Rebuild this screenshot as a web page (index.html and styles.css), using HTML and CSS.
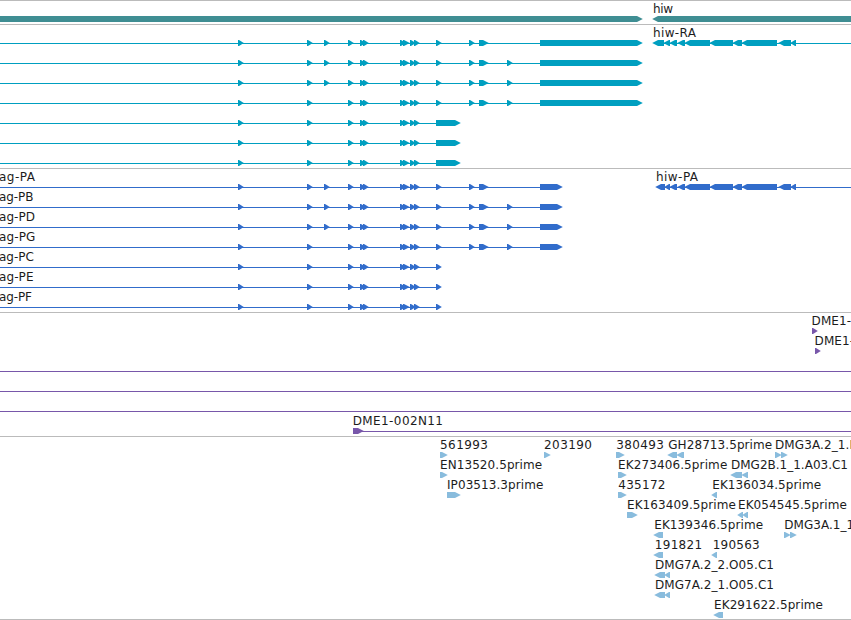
FILE: index.html
```html
<!DOCTYPE html>
<html lang="en">

<head>
    <meta charset="UTF-8">
    <meta name="viewport" content="width=device-width, initial-scale=1.0">
    <title>Genome Tracks</title>
    <link rel="stylesheet" href="styles.css">
</head>

<body>
    <div class="browser">
        <div class="track gene" id="genes"></div>
        <div class="track transcript" id="transcripts"></div>
        <div class="track protein" id="proteins"></div>
        <div class="track bac" id="bacs"></div>
        <div class="track est" id="ests"></div>
    </div>

    <script src="script.js"></script>
</body>

</html>
```

FILE: styles.css
```css
* {
    box-sizing: border-box;
}

body {
    margin: 0;
    background-color: white;
    overflow: hidden;
}

.browser {
    display: flex;
    flex-direction: column;
    width: 851px;
    height: 620px;
    border-bottom: 1px solid #bbbbbb;
}

.track {
    display: flex;
    flex-direction: column;
    border-top: 1px solid #bbbbbb;
    padding: 1px 0 2px 0;
}

.est {
    padding-bottom: 0;
}

.row {
    display: block;
    flex: none;
    width: 851px;
    height: 20px;
}

.label {
    font-family: "DejaVu Sans", sans-serif;
    font-size: 12px;
    fill: #1c1c1c;
}

.line {
    shape-rendering: crispEdges;
}

.gene {
    fill: #3f8e93;
}

.transcript {
    fill: #009fc0;
}

.protein {
    fill: #316ccb;
}

.bac {
    fill: #7857aa;
}

.est {
    fill: #89bcdd;
}
```

FILE: script.js
```js
const SVG = "http://www.w3.org/2000/svg";

const add = (parent, name, attrs) => {
    const el = document.createElementNS(SVG, name);
    for (const key in attrs) {
        el.setAttribute(key, attrs[key]);
    }
    parent.appendChild(el);
    return el;
};

// block with an arrow head, dir is 1 (forward) or -1 (reverse)
const arrow = (start, end, dir) => {
    const head = Math.min(5, end - start - 1);
    if (dir > 0) {
        return `${start},14 ${end - head},14 ${end + 0.8},17 ${end - head},20 ${start},20`;
    }
    return `${end},14 ${start + head},14 ${start - 0.8},17 ${start + head},20 ${end},20`;
};

// labels: [text, x, length], lines: [start, end], blocks: [start, end, dir]
const drawRow = (id, row) => {
    const svg = add(document.getElementById(id), "svg", { class: "row", viewBox: "0 0 851 20" });
    (row.lines || []).forEach(([a, b]) => {
        add(svg, "rect", { class: "line", x: a, y: 17, width: b - a, height: 1 });
    });
    (row.blocks || []).forEach(([a, b, dir]) => {
        add(svg, "polygon", { points: arrow(a, b, dir) });
    });
    (row.labels || []).forEach(([text, x, length]) => {
        const label = add(svg, "text", { class: "label", x: x, y: 11 });
        if (length) {
            label.setAttribute("textLength", length);
        }
        label.textContent = text;
    });
};

const forward = (list) => list.map(([a, b]) => [a, b, 1]);
const reverse = (list) => list.map(([a, b]) => [a, b, -1]);

const first = [[238, 243], [307, 312]];
const extra = [[324, 329]];
const middle = [[348, 353], [360, 365], [363, 368], [400, 405], [403, 409], [410, 415], [414, 419]];
const late = [[436, 441], [469, 474], [479, 488]];
const last = [[507, 512]];

const hiw = [[670, 677], [678, 685], [685, 710], [710, 733], [733, 742], [742, 777], [779, 791], [791, 796]];

// the seven splice forms, shared by transcripts and proteins
const forms = (longEnd, shortEnd) => [
    [...first, ...extra, ...middle, ...late, [540, longEnd]],
    [...first, ...extra, ...middle, ...late, ...last, [540, longEnd]],
    [...first, ...extra, ...middle, ...late, ...last, [540, longEnd]],
    [...first, ...middle, ...late, ...last, [540, longEnd]],
    [...first, ...middle, [436, shortEnd]],
    [...first, ...middle, [436, shortEnd]],
    [...first, ...middle, [436, shortEnd]]
];

drawRow("genes", {
    labels: [["hiw", 653, 20]],
    blocks: [[-10, 642, 1], [653, 860, -1]]
});

forms(642, 460).forEach((exons, i) => {
    const row = { lines: [[0, exons[exons.length - 1][1] - 2]], blocks: forward(exons), labels: [] };
    if (i === 0) {
        row.lines.push([655, 851]);
        row.blocks.push(...reverse([[653, 664], [664, 670], ...hiw]));
        row.labels.push(["hiw-RA", 653, 43]);
    }
    drawRow("transcripts", row);
});

const proteinNames = [["PA", 36], ["PB", 34.5], ["PD", 36], ["PG", 36.3], ["PC", 35], ["PE", 34.5], ["PF", 33]];
forms(562, 441).forEach((exons, i) => {
    const row = { lines: [[0, exons[exons.length - 1][1] - 2]], blocks: forward(exons) };
    row.labels = [["ag-" + proteinNames[i][0], -1, proteinNames[i][1]]];
    if (i === 0) {
        row.lines.push([658, 851]);
        row.blocks.push(...reverse([[656, 665], [665, 670], ...hiw]));
        row.labels.push(["hiw-PA", 656, 42]);
    }
    drawRow("proteins", row);
});

[
    { labels: [["DME1-", 811.6, 39.4]], blocks: [[812, 817, 1]] },
    { labels: [["DME1-", 814.6, 39.4]], blocks: [[815, 820, 1]] },
    { lines: [[0, 851]] },
    { lines: [[0, 851]] },
    { lines: [[0, 851]] },
    { labels: [["DME1-002N11", 352.7, 90.3]], lines: [[353, 851]], blocks: [[353, 363, 1]] }
].forEach((row) => drawRow("bacs", row));

[
    {
        labels: [["561993", 440, 48], ["203190", 544, 48], ["380493", 616.3, 47.5], ["GH28713.5prime", 668.2, 104], ["DMG3A.2_1.I", 775, 78]],
        blocks: [[440, 447, 1], [544, 550, 1], [616, 624, 1], [668, 677, -1], [677, 684, -1], [775, 781, 1], [781, 787, 1]]
    },
    {
        labels: [["EN13520.5prime", 440, 102.2], ["EK273406.5prime", 618, 109.3], ["DMG2B.1_1.A03.C1", 731, 117]],
        blocks: [[440, 447, 1], [618, 626, 1], [731, 742, -1], [742, 748, -1]]
    },
    {
        labels: [["IP03513.3prime", 447, 96.3], ["435172", 618.3, 47.2], ["EK136034.5prime", 712.2, 109]],
        blocks: [[447, 460, 1], [618, 626, 1], [712, 717, -1]]
    },
    {
        labels: [["EK163409.5prime", 627, 108.8], ["EK054545.5prime", 738, 108.8]],
        blocks: [[627, 637, 1], [738, 743, -1], [743, 748, -1]]
    },
    {
        labels: [["EK139346.5prime", 654.2, 109], ["DMG3A.1_1", 784.2, 70]],
        blocks: [[654, 663, -1], [784, 790, 1], [790, 796, 1]]
    },
    {
        labels: [["191821", 654.7, 47.5], ["190563", 712.7, 47]],
        blocks: [[654, 663, -1], [712, 717, -1]]
    },
    {
        labels: [["DMG7A.2_2.O05.C1", 655, 119]],
        blocks: [[655, 665, -1], [665, 670, -1]]
    },
    {
        labels: [["DMG7A.2_1.O05.C1", 655, 119]],
        blocks: [[655, 665, -1], [665, 670, -1]]
    },
    {
        labels: [["EK291622.5prime", 714, 109]],
        blocks: [[714, 723, -1]]
    }
].forEach((row) => drawRow("ests", row));
```
